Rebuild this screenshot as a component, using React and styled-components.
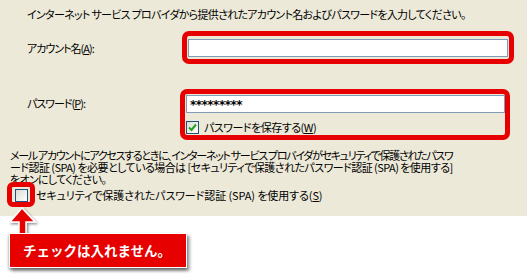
import React from 'react'
import styled, { createGlobalStyle } from 'styled-components'

const GlobalStyle = createGlobalStyle`
  html, body {
    margin: 0;
    padding: 0;
    background: #fff;
  }
  body {
    font-family: "Noto Sans CJK JP", "Noto Sans", sans-serif;
  }
`

const Screen = styled.div`
  position: relative;
  width: 527px;
  height: 280px;
  overflow: hidden;
  background: #fff;
`

const Dialog = styled.div`
  height: 216px;
  box-sizing: border-box;
  padding-top: 7px;
  background: #ece9d8;
  color: #000;
  font-size: 11px;
  letter-spacing: -0.7px;
  font-feature-settings: 'palt';
`

const Intro = styled.div`
  height: 14px;
  line-height: 14px;
  padding-left: 27px;
  white-space: nowrap;
`

const FieldRow = styled.div`
  display: flex;
  align-items: ${(p) => p.$align || 'center'};
  margin-top: ${(p) => p.$gap}px;
`

const Label = styled.div`
  flex: 0 0 auto;
  box-sizing: border-box;
  width: ${(p) => p.$w}px;
  padding-left: 27px;
  margin-top: ${(p) => p.$top || 0}px;
  line-height: 14px;
  letter-spacing: -1px;
  white-space: nowrap;
`

const Highlight = styled.div`
  flex: 0 0 auto;
  box-sizing: border-box;
  width: ${(p) => p.$w}px;
  height: ${(p) => p.$h}px;
  padding: ${(p) => p.$pad};
  border: 5px solid #e60000;
  border-radius: 7px;
`

const TextBox = styled.div`
  box-sizing: border-box;
  height: 18px;
  padding-left: 3px;
  border: 1px solid #7f9db9;
  background: #fff;
  font-family: "DejaVu Sans", sans-serif;
  font-size: 12px;
  font-weight: bold;
  line-height: 18px;
  letter-spacing: -0.5px;
`

const CheckRow = styled.div`
  display: flex;
  align-items: center;
  gap: ${(p) => p.$gap || 4}px;
  margin-top: ${(p) => p.$top || 0}px;
  line-height: 14px;
  letter-spacing: -0.5px;
  white-space: nowrap;
`

const Box = styled.span`
  flex: 0 0 auto;
  display: flex;
  align-items: center;
  justify-content: center;
  box-sizing: border-box;
  width: 13px;
  height: 13px;
  border: 1px solid #1c5180;
  background: linear-gradient(135deg, #dcdcd5 0%, #f4f4f0 70%, #fff 100%);
`

const Note = styled.div`
  margin-top: 9px;
  padding-left: 10px;
  line-height: 12px;
  white-space: nowrap;
`

const NoteLine = styled.div`
  letter-spacing: ${(p) => p.$spacing}px;
`

const BottomRow = styled.div`
  display: flex;
  align-items: center;
  gap: 1px;
  margin-top: -3px;
  padding-left: 7px;
  white-space: nowrap;
  line-height: 14px;
  letter-spacing: -0.1px;
`

const SmallFrame = styled.div`
  box-sizing: border-box;
  width: 28px;
  height: 25px;
  padding: 2px 0 0 3px;
  border: 5px solid #e60000;
  border-radius: 6px;
`

const Arrow = styled.svg`
  position: absolute;
  left: 0;
  top: 200px;
`

const Callout = styled.div`
  position: absolute;
  left: 9px;
  top: 233px;
  box-sizing: border-box;
  width: 178px;
  height: 35px;
  padding-left: 13px;
  border: 1px solid #fff;
  background: #e60000;
  box-shadow: 0 2px 3px rgba(0, 0, 0, 0.45), 3px 3px 3px rgba(0, 0, 0, 0.3);
  color: #fff;
  font-size: 13.5px;
  font-weight: bold;
  line-height: 33px;
  white-space: nowrap;
`

const Key = ({ children }) => <u>{children}</u>

const CheckMark = () => (
  <svg width="9" height="9" viewBox="0 0 9 9">
    <path d="M1 4.5 L3.5 7 L8 1.5" fill="none" stroke="#21a121" strokeWidth="2" />
  </svg>
)

const App = () => {
  return (
    <Screen>
      <GlobalStyle />
      <Dialog>
        <Intro>
          インターネット サービス プロバイダから提供されたアカウント名およびパスワードを入力してください。
        </Intro>

        <FieldRow $gap={10}>
          <Label $w={182}>
            アカウント名(<Key>A</Key>):
          </Label>
          <Highlight $w={332} $h={33} $pad="3px 1px 2px 1px">
            <TextBox />
          </Highlight>
        </FieldRow>

        <FieldRow $gap={25} $align="flex-start">
          <Label $w={180} $top={7}>
            パスワード(<Key>P</Key>):
          </Label>
          <Highlight $w={330} $h={51} $pad="1px 0 0 1px">
            <TextBox>*********</TextBox>
            <CheckRow $top={7} $gap={5}>
              <Box>
                <CheckMark />
              </Box>
              <span>
                パスワードを保存する(<Key>W</Key>)
              </span>
            </CheckRow>
          </Highlight>
        </FieldRow>

        <Note>
          <NoteLine $spacing={-1.3}>
            メール アカウントにアクセスするときに、インターネット サービス プロバイダがセキュリティで保護されたパスワ
          </NoteLine>
          <NoteLine $spacing={-0.55}>
            ード認証 (SPA) を必要としている場合は [セキュリティで保護されたパスワード認証 (SPA) を使用する]
          </NoteLine>
          <NoteLine $spacing={-0.7}>をオンにしてください。</NoteLine>
        </Note>

        <BottomRow>
          <SmallFrame>
            <Box />
          </SmallFrame>
          <span>
            セキュリティで保護されたパスワード認証 (SPA) を使用する(<Key>S</Key>)
          </span>
        </BottomRow>
      </Dialog>

      <Arrow width="45" height="40" viewBox="0 0 45 40">
        <defs>
          <filter id="arrowShadow" x="-30%" y="-30%" width="160%" height="160%">
            <feDropShadow dx="1.5" dy="1.5" stdDeviation="1" floodOpacity="0.45" />
          </filter>
        </defs>
        <polygon
          points="22,8 35,22 26,22 26,34 19,34 19,22 10,22"
          fill="#e60000"
          stroke="#fff"
          strokeWidth="1.5"
          filter="url(#arrowShadow)"
        />
      </Arrow>
      <Callout>チェックは入れません。</Callout>
    </Screen>
  )
}

export default App
